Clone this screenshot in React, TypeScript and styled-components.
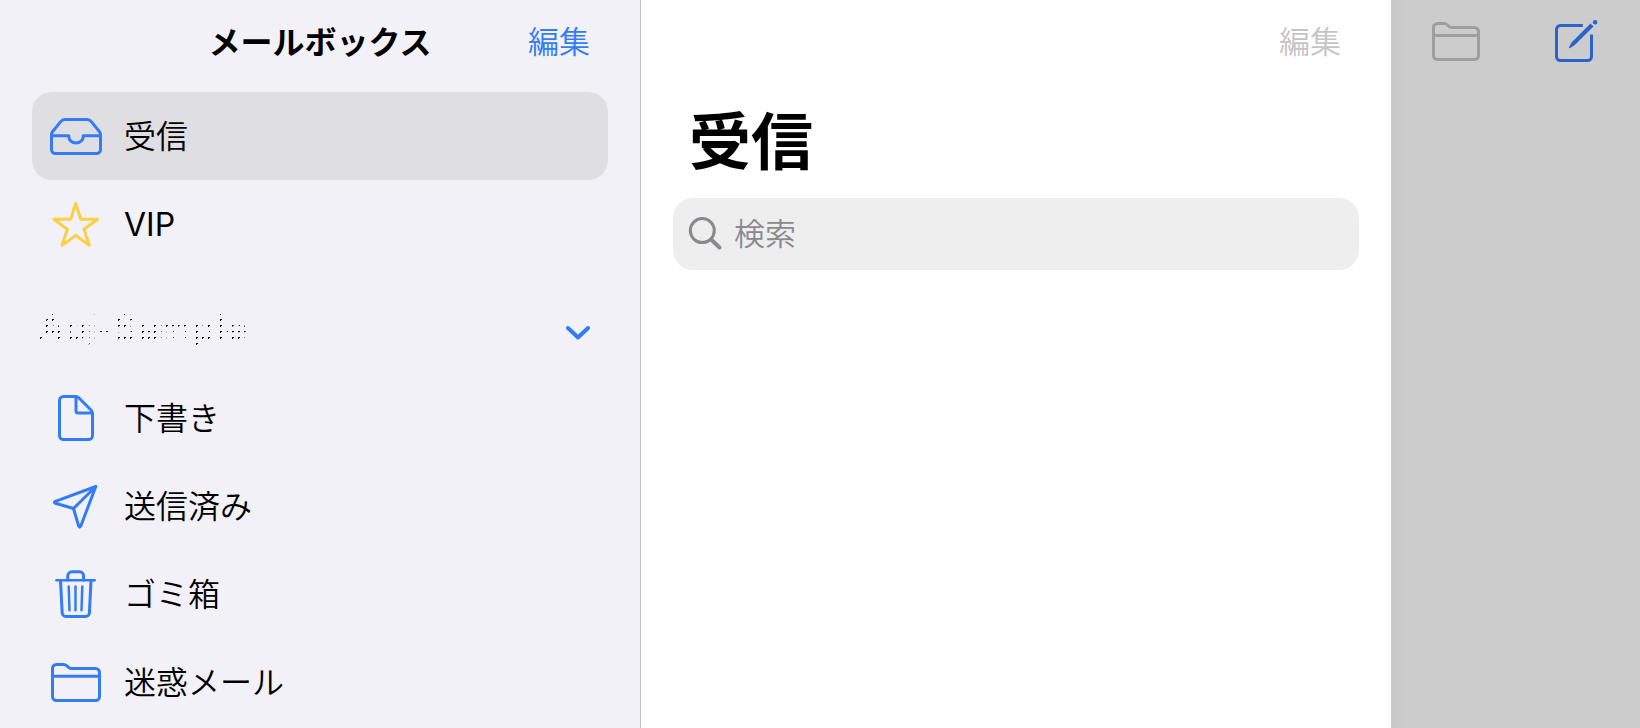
import React from "react";
import styled, { createGlobalStyle } from "styled-components";

const color = {
  blue: "#347bf7",
  yellow: "#fad046",
  sidebar: "#f2f1f7",
  selected: "#dfdee3",
  divider: "#c4c3c8",
  field: "#eeeeee",
  placeholder: "#8a8a8e",
  disabled: "#c5c5c5",
  dimmed: "#cccccc",
  dimmedIcon: "#9e9e9e",
  dimmedBlue: "#2a63cb",
};

const GlobalStyle = createGlobalStyle`
  *, *::before, *::after { box-sizing: border-box; }
  body {
    margin: 0;
    background: #fff;
    color: #000;
    font-family: "Noto Sans CJK JP", "Noto Sans", sans-serif;
    font-size: 31px;
    line-height: 44px;
  }
  button, input { font: inherit; color: inherit; }
  h1, h2, ul { margin: 0; padding: 0; font: inherit; }
  svg { display: block; flex: none; }
`;

const Page = styled.div`
  display: grid;
  grid-template-columns: 641fr 750fr 249fr;
  min-height: 100vh;
`;

const Sidebar = styled.nav`
  background: ${color.sidebar};
  border-right: 1px solid ${color.divider};
  min-width: 0;
`;

const MessageList = styled.main`
  background: #fff;
  min-width: 0;
`;

const Detail = styled.aside`
  background: linear-gradient(90deg, #c8c8c8, ${color.dimmed} 18px);
  min-width: 0;
`;

const SidebarHeader = styled.header`
  display: grid;
  grid-template-columns: 1fr auto 1fr;
  align-items: center;
  height: 84px;
  padding: 0 50px 4px;
`;

const ListHeader = styled.header`
  display: flex;
  align-items: center;
  justify-content: flex-end;
  height: 84px;
  padding: 0 50px 4px;
`;

const DetailHeader = styled.header`
  display: flex;
  align-items: center;
  justify-content: space-between;
  height: 84px;
  padding: 0 40px 0 38px;
`;

const SidebarTitle = styled.h1`
  grid-column: 2;
  font-size: 32px;
  font-weight: 700;
  white-space: nowrap;
`;

const PlainButton = styled.button<{ $color: string }>`
  justify-self: end;
  padding: 0;
  border: 0;
  background: none;
  color: ${(p) => p.$color};
  font-weight: 350;
  white-space: nowrap;
`;

const Rows = styled.ul`
  list-style: none;
  margin: 0 32px;
`;

const FirstRows = styled(Rows)`
  margin-top: 8px;
`;

const Row = styled.a<{ $selected?: boolean }>`
  display: flex;
  align-items: center;
  gap: 20px;
  height: 88px;
  padding: 0 16px;
  border-radius: 20px;
  background: ${(p) => (p.$selected ? color.selected : "transparent")};
  color: inherit;
  text-decoration: none;
`;

const Label = styled.span`
  padding-bottom: 4px;
  font-size: 32px;
  font-weight: 350;
`;

const LatinLabel = styled.span`
  padding-top: 2px;
  font-family: Inter, sans-serif;
  font-size: 32px;
  font-weight: 400;
`;

const AccountHeader = styled.button`
  display: flex;
  align-items: center;
  justify-content: space-between;
  width: 100%;
  height: 106px;
  padding: 24px 50px 0 38px;
  border: 0;
  background: none;
  text-align: left;
`;

/* Account name rendered as a sparse 6px dot screen */
const AccountName = styled.span`
  padding-bottom: 10px;
  font-family: Inter, sans-serif;
  font-size: 37px;
  font-weight: 600;
  line-height: 46px;
  mask-image:
    conic-gradient(from 270deg at 2px 1px, #000 90deg, transparent 0),
    conic-gradient(from 270deg at 1px 2px, #000 90deg, transparent 0);
  mask-size: 6px 6px;
  mask-position: 2px 2px;
`;

const LargeTitle = styled.h2`
  padding: 10px 48px 16px;
  font-size: 62px;
  font-weight: 700;
  line-height: 88px;
`;

const SearchField = styled.label`
  display: flex;
  align-items: center;
  gap: 11px;
  height: 72px;
  margin: 0 32px;
  padding: 0 14px;
  border-radius: 20px;
  background: ${color.field};
`;

const SearchInput = styled.input`
  flex: 1;
  min-width: 0;
  padding: 0 0 4px;
  border: 0;
  outline: 0;
  background: none;
  font-weight: 350;
  &::placeholder {
    color: ${color.placeholder};
    opacity: 1;
  }
`;

const Glyph = styled.svg<{ $color: string }>`
  fill: none;
  stroke: ${(p) => p.$color};
  stroke-width: 3;
  stroke-linecap: round;
  stroke-linejoin: round;
`;

const Inbox = () => (
  <Glyph $color={color.blue} width="56" height="48" viewBox="0 0 56 48" aria-hidden="true">
    <path d="M3.5 22.5V37.5a4 4 0 0 0 4 4H48.5a4 4 0 0 0 4-4V22.5Q52.5 21 51.5 19.8L43.3 9.6Q41.6 7.5 39.2 7.5H16.8Q14.4 7.5 12.7 9.6L4.5 19.8Q3.5 21 3.5 22.5Z" />
    <path d="M3.5 23.7H20.8V24.7a7.2 6.3 0 0 0 14.4 0V23.7H52.5" />
  </Glyph>
);

const Star = () => (
  <Glyph $color={color.yellow} width="56" height="48" viewBox="0 0 56 48" aria-hidden="true">
    <path d="M27.7 3.5L32.8 19.3H49.6L36 29.2L41.3 45.2L27.7 35.6L14 45.2L19.4 29.2L5.8 19.3H22.6Z" />
  </Glyph>
);

const Draft = () => (
  <Glyph $color={color.blue} width="56" height="48" viewBox="0 0 56 48" aria-hidden="true">
    <path d="M15.5 2.5H27.5Q29.5 2.5 31 4L43 16Q44.5 17.5 44.5 19.5V41.5a4 4 0 0 1-4 4H15.5a4 4 0 0 1-4-4V6.5a4 4 0 0 1 4-4Z" />
    <path d="M28 3V17a2 2 0 0 0 2 2H44" />
  </Glyph>
);

const Plane = () => (
  <Glyph $color={color.blue} width="56" height="48" viewBox="0 0 56 48" aria-hidden="true">
    <path d="M47.8 4.5L7.4 19.3Q5.3 20.3 7.4 21.3L25.5 26.5L30.7 44.2Q31.7 46.2 32.7 44.2Z" />
    <path d="M47.5 4.8L25.5 26.5" />
  </Glyph>
);

const Trash = () => (
  <Glyph $color={color.blue} width="56" height="48" viewBox="0 0 56 48" aria-hidden="true">
    <path d="M8.5 10.2H46.7" strokeWidth="2.5" />
    <path d="M12.5 10.5L14.2 43a3.7 3.7 0 0 0 3.7 3.5H37.7a3.7 3.7 0 0 0 3.7-3.5L43 10.5" />
    <path d="M19.8 10V5.8a4 4 0 0 1 4-4H31.6a4 4 0 0 1 4 4V10" />
    <path d="M20.7 16.5L21.5 40.2M27.5 16.5V40.2M34.3 16.5L33.5 40.2" strokeWidth="2.5" />
  </Glyph>
);

const Folder = () => (
  <Glyph $color={color.blue} width="56" height="48" viewBox="0 0 56 48" aria-hidden="true">
    <path d="M4.5 10.5a4 4 0 0 1 4-4H15.5Q17.5 6.5 19 8L20.5 9.3Q22 10.5 24 10.5H47.5a4 4 0 0 1 4 4V38.5a4 4 0 0 1-4 4H8.5a4 4 0 0 1-4-4Z" />
    <path d="M4.5 18.2H51.5" />
  </Glyph>
);

const ToolbarFolder = () => (
  <Glyph $color={color.dimmedIcon} width="54" height="48" viewBox="0 0 54 48" aria-hidden="true">
    <path d="M4.5 9.5a4 4 0 0 1 4-4H15Q17 5.5 18.5 7L19.7 8.2Q21 9.5 23 9.5H45.5a4 4 0 0 1 4 4V37.5a4 4 0 0 1-4 4H8.5a4 4 0 0 1-4-4Z" />
    <path d="M4.5 17.5H49.5" />
  </Glyph>
);

const Compose = () => (
  <Glyph $color={color.dimmedBlue} width="48" height="48" viewBox="0 0 48 48" aria-hidden="true">
    <path
      d="M30.8 7.5H8.5a4 4 0 0 0-4 4V38.5a4 4 0 0 0 4 4H35.5a4 4 0 0 0 4-4V16.5"
      strokeLinecap="butt"
    />
    <path
      d="M38.5 5.5L41.5 8.5L22.5 27.2L17.8 30.2Q16.8 30.3 17 29.3L19.5 24.5Z"
      fill={color.dimmedBlue}
      stroke="none"
    />
    <circle cx="43.1" cy="4.2" r="2.2" fill={color.dimmedBlue} stroke="none" />
  </Glyph>
);

const Magnifier = () => (
  <Glyph $color={color.placeholder} width="36" height="36" viewBox="0 0 36 36" aria-hidden="true">
    <circle cx="15.3" cy="14.6" r="12" />
    <path d="M24.2 23.5L32.5 31.5" strokeWidth="4" />
  </Glyph>
);

const Chevron = () => (
  <Glyph $color={color.blue} width="24" height="16" viewBox="0 0 24 16" aria-hidden="true">
    <path d="M2 3L12 12.5L22 3" strokeWidth="4" />
  </Glyph>
);

const accountRows = [
  { label: "下書き", href: "#drafts", Icon: Draft },
  { label: "送信済み", href: "#sent", Icon: Plane },
  { label: "ゴミ箱", href: "#trash", Icon: Trash },
  { label: "迷惑メール", href: "#junk", Icon: Folder },
];

export default function App() {
  return (
    <>
      <GlobalStyle />
      <Page lang="ja">
        <Sidebar>
          <SidebarHeader>
            <SidebarTitle>メールボックス</SidebarTitle>
            <PlainButton $color={color.blue}>編集</PlainButton>
          </SidebarHeader>
          <FirstRows>
            <li>
              <Row href="#inbox" $selected aria-current="page">
                <Inbox />
                <Label>受信</Label>
              </Row>
            </li>
            <li>
              <Row href="#vip">
                <Star />
                <LatinLabel>VIP</LatinLabel>
              </Row>
            </li>
          </FirstRows>
          <AccountHeader aria-expanded="true">
            <AccountName>Aoj-Sample</AccountName>
            <Chevron />
          </AccountHeader>
          <Rows>
            {accountRows.map(({ label, href, Icon }) => (
              <li key={label}>
                <Row href={href}>
                  <Icon />
                  <Label>{label}</Label>
                </Row>
              </li>
            ))}
          </Rows>
        </Sidebar>
        <MessageList>
          <ListHeader>
            <PlainButton $color={color.disabled} disabled>
              編集
            </PlainButton>
          </ListHeader>
          <LargeTitle>受信</LargeTitle>
          <SearchField>
            <Magnifier />
            <SearchInput type="search" placeholder="検索" aria-label="検索" />
          </SearchField>
        </MessageList>
        <Detail>
          <DetailHeader>
            <PlainButton $color={color.dimmedIcon} disabled aria-label="フォルダ">
              <ToolbarFolder />
            </PlainButton>
            <PlainButton $color={color.dimmedBlue} aria-label="作成">
              <Compose />
            </PlainButton>
          </DetailHeader>
        </Detail>
      </Page>
    </>
  );
}
